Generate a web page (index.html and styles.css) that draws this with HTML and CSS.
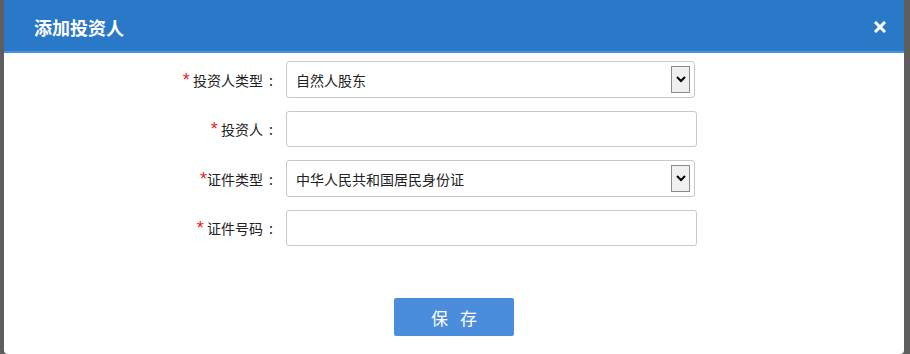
FILE: index.html
```html
<!DOCTYPE html>
<html lang="zh-CN">
<head>
<meta charset="utf-8">
<title>添加投资人</title>
<link rel="stylesheet" href="styles.css">
</head>
<body>
<div class="dialog">
  <div class="header">
    <span class="title">添加投资人</span>
    <span class="close">
      <svg width="12" height="12" viewBox="0 0 12 12"><path d="M2 2 L10 10 M10 2 L2 10" stroke="#fff" stroke-width="3" stroke-linecap="square"/></svg>
    </span>
  </div>
  <div class="form">
    <label class="label"><span class="req">*</span> 投资人类型<span class="colon">:</span></label>
    <div class="select">
      <span class="value">自然人股东</span>
      <span class="arrow"><svg width="10" height="7" viewBox="0 0 10 7"><path d="M1 1 L5 5 L9 1" fill="none" stroke="#000" stroke-width="2"/></svg></span>
    </div>

    <label class="label"><span class="req">*</span> 投资人<span class="colon">:</span></label>
    <div class="input"></div>

    <label class="label"><span class="req">*</span>证件类型<span class="colon">:</span></label>
    <div class="select">
      <span class="value">中华人民共和国居民身份证</span>
      <span class="arrow"><svg width="10" height="7" viewBox="0 0 10 7"><path d="M1 1 L5 5 L9 1" fill="none" stroke="#000" stroke-width="2"/></svg></span>
    </div>

    <label class="label"><span class="req">*</span> 证件号码<span class="colon">:</span></label>
    <div class="input"></div>
  </div>
  <div class="actions">
    <button class="save">保 存</button>
  </div>
</div>
</body>
</html>
```
FILE: styles.css
```css
* { box-sizing: border-box; }
html, body {
  margin: 0;
  padding: 0;
  background: #5e5e5e;
  font-family: "Noto Sans CJK SC", "Noto Sans", sans-serif;
}
.dialog {
  margin-left: 4px;
  width: 900px;
  height: 354px;
  background: #fff;
  border-radius: 0 0 4px 4px;
  overflow: hidden;
}
.header {
  height: 53px;
  background: #2a79c9;
  border-bottom: 2px solid #4b92dc;
  display: flex;
  align-items: center;
  justify-content: space-between;
  padding: 2px 18px 0 30px;
}
.title {
  color: #fff;
  font-size: 18px;
  font-weight: bold;
  line-height: 20px;
}
.close {
  display: flex;
  width: 12px;
  height: 12px;
}
.form {
  display: grid;
  grid-template-columns: 273px 411px;
  column-gap: 9px;
  row-gap: 13px;
  padding-top: 8px;
  align-items: center;
}
.label {
  text-align: right;
  font-size: 14px;
  color: #222;
  line-height: 20px;
  white-space: nowrap;
}
.colon {
  display: inline-block;
  width: 14px;
  text-align: center;
  padding-left: 2px;
}
.req {
  color: #e8231c;
  font-family: "Liberation Sans", sans-serif;
  font-size: 18px;
  line-height: 14px;
}
.select {
  width: 409px;
  height: 37px;
  border: 1px solid #c8c8c8;
  border-radius: 3px;
  display: flex;
  align-items: center;
  justify-content: space-between;
  padding: 0 4px 0 9px;
  font-size: 14px;
  color: #222;
}
.arrow {
  width: 19px;
  height: 27px;
  border: 1px solid #8a8a8a;
  background: #f0f0f0;
  display: flex;
  align-items: center;
  justify-content: center;
}
.input {
  width: 411px;
  height: 36px;
  border: 1px solid #c8c8c8;
  border-radius: 3px;
}
.actions {
  display: flex;
  justify-content: center;
  padding-top: 52px;
}
.save {
  width: 120px;
  height: 38px;
  border: none;
  border-radius: 2px;
  background: #4a8ddc;
  color: #fff;
  font-family: "Noto Sans CJK SC", sans-serif;
  font-size: 17px;
  letter-spacing: 4px;
  padding: 0 0 0 4px;
}
```
